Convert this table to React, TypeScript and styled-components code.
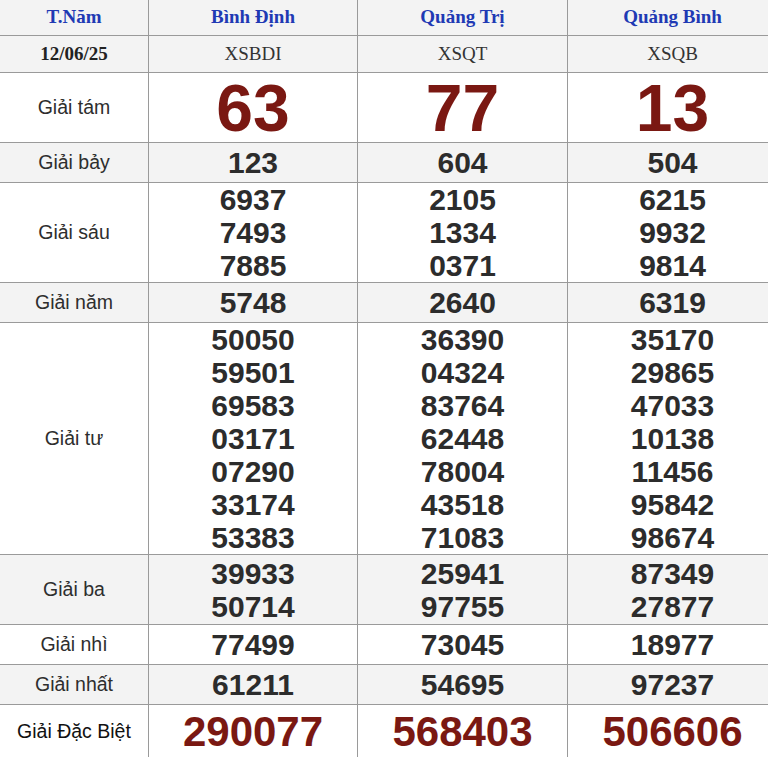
import React from "react";
import styled, { createGlobalStyle } from "styled-components";

const Global = createGlobalStyle`
  html, body { margin: 0; padding: 0; background: #ffffff; overflow: hidden; }
  body { font-family: "Liberation Sans", Arial, sans-serif; }
`;

const Board = styled.div`
  width: 778px;
  display: flex;
  flex-direction: column;
`;

const Row = styled.div<{ $h: number; $shade?: boolean }>`
  display: grid;
  grid-template-columns: 149px 209px 210px 210px;
  height: ${(p) => p.$h}px;
  background: ${(p) => (p.$shade ? "#f3f3f3" : "#ffffff")};
`;

const Cell = styled.div`
  box-sizing: border-box;
  border-right: 1px solid #9a9a9a;
  border-bottom: 1px solid #9a9a9a;
  display: flex;
  flex-direction: column;
  align-items: center;
  justify-content: center;
`;

const HeadText = styled.span`
  font-family: "Liberation Serif", "Times New Roman", serif;
  font-weight: 700;
  font-size: 19px;
  line-height: 22px;
  margin-top: -2px;
  color: #2039b4;
`;

const DateText = styled.span`
  font-family: "Liberation Serif", "Times New Roman", serif;
  font-weight: 700;
  font-size: 19px;
  color: #222222;
`;

const CodeText = styled.span`
  font-family: "Liberation Serif", "Times New Roman", serif;
  font-size: 19px;
  color: #333333;
`;

const Label = styled.span<{ $dark?: boolean }>`
  font-family: "Liberation Sans", Arial, sans-serif;
  font-size: 19.5px;
  color: ${(p) => (p.$dark ? "#111111" : "#2e2e2e")};
`;

const Num = styled.span<{ $size: "sm" | "big" | "db" }>`
  font-family: "Liberation Sans", Arial, sans-serif;
  font-weight: 700;
  display: block;
  text-align: center;
  font-size: ${(p) => (p.$size === "big" ? 66 : p.$size === "db" ? 42 : 30)}px;
  line-height: ${(p) => (p.$size === "big" ? 68 : p.$size === "db" ? 50 : 33)}px;
  color: ${(p) => (p.$size === "sm" ? "#2c2c2c" : "#7a1812")};
`;

type Prize = {
  label: string;
  h: number;
  shade?: boolean;
  size: "sm" | "big" | "db";
  values: string[][];
};

const prizes: Prize[] = [
  { label: "Giải tám", h: 70, size: "big", values: [["63"], ["77"], ["13"]] },
  { label: "Giải bảy", h: 40, shade: true, size: "sm", values: [["123"], ["604"], ["504"]] },
  {
    label: "Giải sáu",
    h: 100,
    size: "sm",
    values: [
      ["6937", "7493", "7885"],
      ["2105", "1334", "0371"],
      ["6215", "9932", "9814"],
    ],
  },
  { label: "Giải năm", h: 40, shade: true, size: "sm", values: [["5748"], ["2640"], ["6319"]] },
  {
    label: "Giải tư",
    h: 232,
    size: "sm",
    values: [
      ["50050", "59501", "69583", "03171", "07290", "33174", "53383"],
      ["36390", "04324", "83764", "62448", "78004", "43518", "71083"],
      ["35170", "29865", "47033", "10138", "11456", "95842", "98674"],
    ],
  },
  {
    label: "Giải ba",
    h: 70,
    shade: true,
    size: "sm",
    values: [
      ["39933", "50714"],
      ["25941", "97755"],
      ["87349", "27877"],
    ],
  },
  { label: "Giải nhì", h: 40, size: "sm", values: [["77499"], ["73045"], ["18977"]] },
  { label: "Giải nhất", h: 40, shade: true, size: "sm", values: [["61211"], ["54695"], ["97237"]] },
  { label: "Giải Đặc Biệt", h: 54, size: "db", values: [["290077"], ["568403"], ["506606"]] },
];

export default function App() {
  return (
    <>
      <Global />
      <Board>
        <Row $h={36} $shade>
          <Cell><HeadText>T.Năm</HeadText></Cell>
          <Cell><HeadText>Bình Định</HeadText></Cell>
          <Cell><HeadText>Quảng Trị</HeadText></Cell>
          <Cell><HeadText>Quảng Bình</HeadText></Cell>
        </Row>
        <Row $h={37} $shade>
          <Cell><DateText>12/06/25</DateText></Cell>
          <Cell><CodeText>XSBDI</CodeText></Cell>
          <Cell><CodeText>XSQT</CodeText></Cell>
          <Cell><CodeText>XSQB</CodeText></Cell>
        </Row>
        {prizes.map((p) => (
          <Row key={p.label} $h={p.h} $shade={p.shade}>
            <Cell>
              <Label $dark={p.size === "db"}>{p.label}</Label>
            </Cell>
            {p.values.map((col, i) => (
              <Cell key={i}>
                {col.map((v, j) => (
                  <Num key={j} $size={p.size}>{v}</Num>
                ))}
              </Cell>
            ))}
          </Row>
        ))}
      </Board>
    </>
  );
}
